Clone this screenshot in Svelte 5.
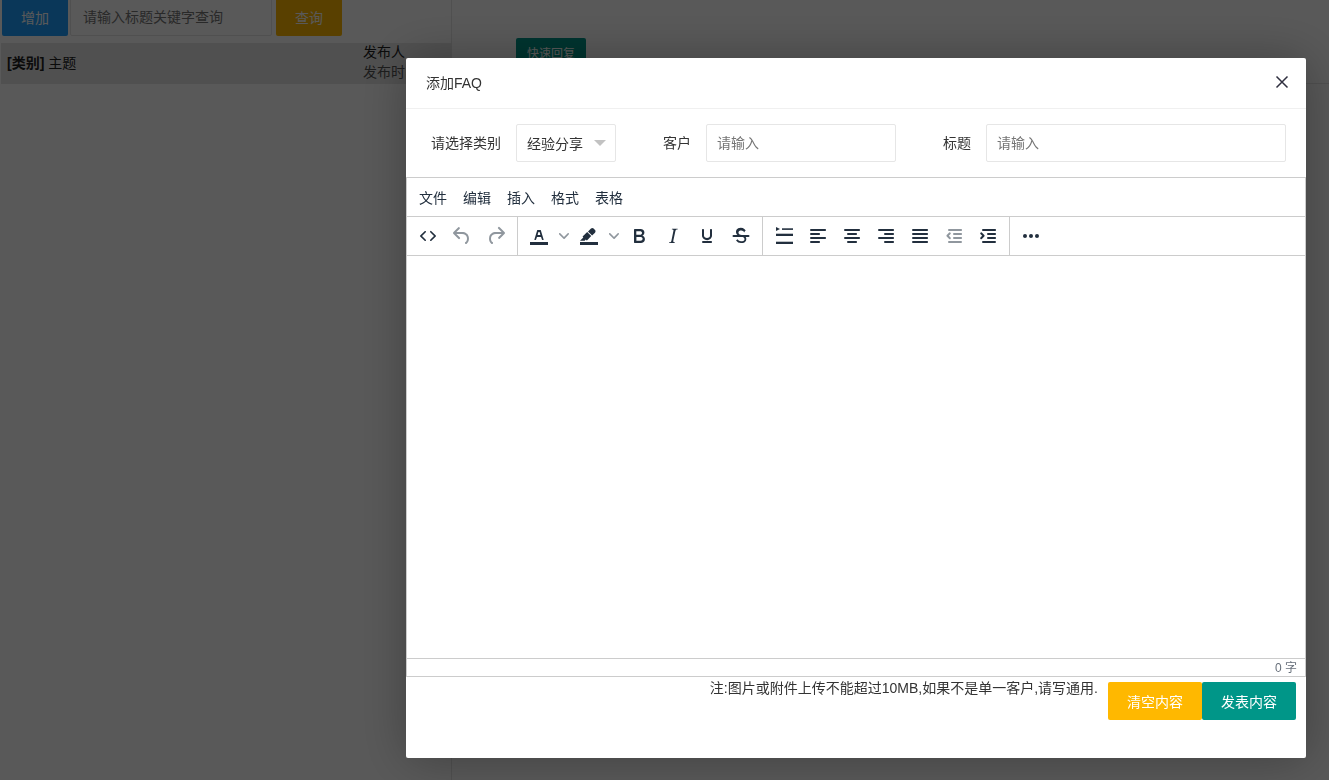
<script>
  const menus = ['文件', '编辑', '插入', '格式', '表格'];
  const icons = {
    code: 'M9.8 15.7c.3.3.3.8 0 1-.3.4-.9.4-1.2 0l-4.4-4.1a.8.8 0 0 1 0-1.2l4.4-4.2c.3-.3.9-.3 1.2 0 .3.3.3.8 0 1.1L6 12l3.8 3.7zM14.2 15.7c-.3.3-.3.8 0 1 .4.4.9.4 1.2 0l4.4-4.1c.3-.3.3-.9 0-1.2l-4.4-4.2a.8.8 0 0 0-1.2 0c-.3.3-.3.8 0 1.1L18 12l-3.8 3.7z',
    undo: 'M6.4 8H12c3.7 0 6.2 2 6.8 5.1.6 2.7-.4 5.6-2.3 6.8a1 1 0 0 1-1-1.8c1.1-.6 1.8-2.7 1.4-4.6-.5-2.1-2.1-3.5-4.9-3.5H6.4l3.3 3.3a1 1 0 1 1-1.4 1.4l-5-5a1 1 0 0 1 0-1.4l5-5a1 1 0 0 1 1.4 1.4L6.4 8z',
    redo: 'M17.6 10H12c-2.8 0-4.4 1.4-4.9 3.5-.4 2 .3 4 1.4 4.6a1 1 0 1 1-1 1.8c-2-1.2-2.9-4.1-2.3-6.8.6-3 3-5.1 6.8-5.1h5.6l-3.3-3.3a1 1 0 1 1 1.4-1.4l5 5a1 1 0 0 1 0 1.4l-5 5a1 1 0 0 1-1.4-1.4l3.3-3.3z',
    color: 'M3 18h18v3H3zM8.7 16h-.8a.5.5 0 0 1-.5-.6l2.7-9c.1-.3.3-.4.5-.4h2.8c.2 0 .4.1.5.4l2.7 9a.5.5 0 0 1-.5.6h-.8a.5.5 0 0 1-.4-.4l-.7-2.2c0-.3-.3-.4-.5-.4h-3.4c-.2 0-.4.1-.5.4l-.7 2.2c0 .3-.2.4-.4.4zm2.6-7.6l-.6 2a.5.5 0 0 0 .5.6h1.6a.5.5 0 0 0 .5-.6l-.6-2c0-.3-.3-.4-.5-.4h-.4c-.2 0-.4.1-.5.4z',
    highlight: 'M3 18h18v3H3zM7.7 16.7H3l3.3-3.3-.7-.8L10.2 8l4 4.1-4 4.2c-.2.2-.6.2-.8 0l-.6-.7-1.1 1.1zm5-7.5L11 7.4l3-2.9a2 2 0 0 1 2.6 0L18 6c.7.7.7 2 0 2.7l-2.9 2.9-1.8-1.8-.5-.6',
    bold: 'M7.8 19c-.3 0-.5 0-.6-.2l-.2-.5V5.7c0-.2 0-.4.2-.5l.6-.2h5c1.5 0 2.7.3 3.5 1 .7.6 1.1 1.4 1.1 2.5a3 3 0 0 1-.6 1.9c-.4.6-1 1-1.6 1.2.4.1.9.3 1.3.6s.8.7 1 1.2c.3.4.4 1 .4 1.6 0 1.3-.4 2.3-1.3 3-.8.7-2 1-3.7 1H7.8zm5-8.3c.6 0 1.2-.1 1.6-.5.4-.3.6-.7.6-1.3 0-1.1-.8-1.7-2.3-1.7H9.3v3.5h3.4zm.5 6c.7 0 1.3-.1 1.7-.4.4-.4.6-.9.6-1.5s-.2-1-.7-1.4c-.4-.3-1-.4-2-.4H9.4v3.8h4z',
    italic: 'M16.7 4.7l-.1.9h-.3c-.6 0-1 0-1.4.3-.3.3-.4.6-.5 1.1l-2.1 9.8v.6c0 .5.4.8 1.4.8h.2l-.2.8H8l.2-.8h.2c1.1 0 1.8-.5 2-1.5l2-9.8.1-.5c0-.6-.4-.8-1.4-.8h-.3l.2-.9h5.8z',
    underline: 'M16 5c.6 0 1 .4 1 1v5.5a4 4 0 0 1-.4 1.8l-1 1.4a5.3 5.3 0 0 1-5.5 1 5 5 0 0 1-1.6-1c-.5-.4-.8-.9-1.1-1.4a4 4 0 0 1-.4-1.8V6c0-.6.4-1 1-1s1 .4 1 1v5.5c0 .3 0 .6.2 1l.6.7a3.3 3.3 0 0 0 2.2.8 3.4 3.4 0 0 0 2.2-.8c.3-.2.4-.5.6-.8l.2-.9V6c0-.6.4-1 1-1zM8 17h8c.6 0 1 .4 1 1s-.4 1-1 1H8a1 1 0 0 1 0-2z',
    strike: 'M15.600 8.500c-.5-.7-1-1.100-1.300-1.300-.6-.4-1.300-.6-2-.6-2.700 0-2.800 1.700-2.800 2.100 0 1.600 1.800 2 3.200 2.300 4.400.9 4.600 2.800 4.600 3.900 0 1.400-.7 4.100-5 4.100A6.200 6.200 0 0 1 7 16.400l1.500-1.100c.4.6 1.600 2 3.700 2 1.600 0 2.500-.4 3-1 .5-.8.3-2-.3-2.600-.7-.7-1.600-.9-2.900-1.200-1.600-.4-5-1.100-5-4.400 0-.8.3-4.300 4.800-4.300 1.400 0 2.600.4 3.500 1.100.6.4 1 .9 1.400 1.500l-1.100 1.200z|M4.500 11h15a1 1 0 0 1 0 2h-15a1 1 0 0 1 0-2z',
    lineheight: 'M4 3l4 2-4 2z|M10 4.300h11v1.600H10z|M4 9.700h17v2.300H4z|M4 17.700h17v2.300H4z',
    left: 'M5 5h14c.6 0 1 .4 1 1s-.4 1-1 1H5a1 1 0 1 1 0-2zm0 4h8c.6 0 1 .4 1 1s-.4 1-1 1H5a1 1 0 1 1 0-2zm0 8h8c.6 0 1 .4 1 1s-.4 1-1 1H5a1 1 0 0 1 0-2zm0-4h14c.6 0 1 .4 1 1s-.4 1-1 1H5a1 1 0 0 1 0-2z',
    center: 'M5 5h14c.6 0 1 .4 1 1s-.4 1-1 1H5a1 1 0 1 1 0-2zm3 4h8c.6 0 1 .4 1 1s-.4 1-1 1H8a1 1 0 1 1 0-2zm0 8h8c.6 0 1 .4 1 1s-.4 1-1 1H8a1 1 0 0 1 0-2zm-3-4h14c.6 0 1 .4 1 1s-.4 1-1 1H5a1 1 0 0 1 0-2z',
    right: 'M5 5h14c.6 0 1 .4 1 1s-.4 1-1 1H5a1 1 0 1 1 0-2zm6 4h8c.6 0 1 .4 1 1s-.4 1-1 1h-8a1 1 0 0 1 0-2zm0 8h8c.6 0 1 .4 1 1s-.4 1-1 1h-8a1 1 0 0 1 0-2zm-6-4h14c.6 0 1 .4 1 1s-.4 1-1 1H5a1 1 0 0 1 0-2z',
    justify: 'M5 5h14c.6 0 1 .4 1 1s-.4 1-1 1H5a1 1 0 1 1 0-2zm0 4h14c.6 0 1 .4 1 1s-.4 1-1 1H5a1 1 0 1 1 0-2zm0 4h14c.6 0 1 .4 1 1s-.4 1-1 1H5a1 1 0 0 1 0-2zm0 4h14c.6 0 1 .4 1 1s-.4 1-1 1H5a1 1 0 0 1 0-2z',
    outdent: 'M7 5h12c.6 0 1 .4 1 1s-.4 1-1 1H7a1 1 0 1 1 0-2zm5 4h7c.6 0 1 .4 1 1s-.4 1-1 1h-7a1 1 0 0 1 0-2zm0 4h7c.6 0 1 .4 1 1s-.4 1-1 1h-7a1 1 0 0 1 0-2zm-5 4h12a1 1 0 0 1 0 2H7a1 1 0 0 1 0-2zm1.600-3.400a1 1 0 0 1-1.400 1.400L4.700 12.500a1 1 0 0 1 0-1.400L7.200 8.600a1 1 0 0 1 1.400 1.400L6.800 11.800l1.800 1.800z',
    indent: 'M7 5h12c.6 0 1 .4 1 1s-.4 1-1 1H7a1 1 0 1 1 0-2zm5 4h7c.6 0 1 .4 1 1s-.4 1-1 1h-7a1 1 0 0 1 0-2zm0 4h7c.6 0 1 .4 1 1s-.4 1-1 1h-7a1 1 0 0 1 0-2zm-5 4h12a1 1 0 0 1 0 2H7a1 1 0 0 1 0-2zm-2.600-3.400l1.800-1.800-1.800-1.800a1 1 0 0 1 1.400-1.400l2.500 2.500a1 1 0 0 1 0 1.400L5.800 15a1 1 0 0 1-1.400-1.400z',
    more: 'M6 10a2 2 0 0 0-2 2c0 1.100.9 2 2 2a2 2 0 0 0 2-2 2 2 0 0 0-2-2zm12 0a2 2 0 0 0-2 2c0 1.100.9 2 2 2a2 2 0 0 0 2-2 2 2 0 0 0-2-2zm-6 0a2 2 0 0 0-2 2c0 1.100.9 2 2 2a2 2 0 0 0 2-2 2 2 0 0 0-2-2z'
  };
  const groups = [
    [{ i: 'code' }, { i: 'undo', off: true }, { i: 'redo', off: true }],
    [{ i: 'color', split: true }, { i: 'highlight', split: true }, { i: 'bold' }, { i: 'italic' }, { i: 'underline' }, { i: 'strike' }],
    [{ i: 'lineheight' }, { i: 'left' }, { i: 'center' }, { i: 'right' }, { i: 'justify' }, { i: 'outdent', off: true }, { i: 'indent' }],
    [{ i: 'more' }]
  ];
</script>

<div class="page">
  <section class="left">
    <div class="search">
      <button class="btn blue">增加</button>
      <input class="kw" placeholder="请输入标题关键字查询" />
      <button class="btn amber">查询</button>
    </div>
    <div class="thead">
      <span class="subject"><b>[类别]</b> 主题</span>
      <span class="meta"><span>发布人</span><span class="time">发布时间</span></span>
    </div>
  </section>
  <section class="right">
    <div class="reply-bar"><button class="reply">快速回复</button></div>
  </section>
</div>

<div class="shade"></div>

<div class="modal">
  <header class="m-head">
    <span class="m-title">添加FAQ</span>
    <svg class="close" width="14" height="14" viewBox="0 0 14 14"><path d="M1.500 1.500l11 11M12.500 1.500l-11 11" /></svg>
  </header>
  <div class="fields">
    <span class="label first">请选择类别</span>
    <div class="select">经验分享<i class="caret"></i></div>
    <span class="label gap">客户</span>
    <input class="field customer" placeholder="请输入" />
    <span class="label gap">标题</span>
    <input class="field title" placeholder="请输入" />
  </div>
  <div class="editor">
    <div class="menubar">
      {#each menus as m}<span class="menu">{m}</span>{/each}
    </div>
    <div class="toolbar">
      {#each groups as g}
        <div class="group">
          {#each g as b}
            <span class="tool" class:off={b.off}>
              <svg width="24" height="24" viewBox="0 0 24 24">
                {#each icons[b.i].split('|') as d}<path fill-rule="evenodd" {d} />{/each}
              </svg>
            </span>
            {#if b.split}
              <span class="chev">
                <svg width="10" height="10" viewBox="0 0 10 10"><path d="M8.700 2.200c.3-.3.8-.3 1 0 .4.4.4.9 0 1.200L5.700 7.800c-.3.3-.9.3-1.200 0L.2 3.400a.8.8 0 0 1 0-1.200c.3-.3.8-.3 1.100 0L5 6l3.700-3.800z" /></svg>
              </span>
            {/if}
          {/each}
        </div>
      {/each}
    </div>
    <div class="body"></div>
    <div class="status">0 字</div>
  </div>
  <div class="foot">
    <span class="note">注:图片或附件上传不能超过10MB,如果不是单一客户,请写通用.</span>
    <button class="btn amber big">清空内容</button>
    <button class="btn teal big">发表内容</button>
  </div>
</div>

<style>
  :global(body) {
    margin: 0;
    background: #fff;
    font-family: "Liberation Sans", "Noto Sans CJK SC", sans-serif;
    font-size: 14px;
    color: #333;
    overflow: hidden;
  }
  .page {
    display: flex;
    height: 780px;
  }
  .left {
    flex: none;
    width: 450px;
    padding-left: 1px;
    border-right: 1px solid #e6e6e6;
  }
  .search {
    display: flex;
    margin: -2px 0 0 1px;
  }
  .btn {
    border: 0;
    border-radius: 2px;
    height: 38px;
    padding: 0;
    color: #fff;
    font: inherit;
  }
  .blue { background: #1e9fff; width: 66px; }
  .amber { background: #ffb800; }
  .search .amber { width: 66px; margin-left: 4px; }
  .kw {
    width: 202px;
    height: 38px;
    box-sizing: border-box;
    margin-left: 2px;
    padding: 0 10px 0 12px;
    border: 1px solid #e6e6e6;
    border-radius: 2px;
    font: inherit;
    outline: 0;
  }
  .thead {
    display: flex;
    align-items: center;
    height: 41px;
    box-sizing: border-box;
    margin-top: 7px;
    padding: 0 0 4px 6px;
    background: #e6e6e6;
    color: #222;
    overflow: hidden;
  }
  .subject { width: 356px; flex: none; }
  .meta {
    display: flex;
    flex-direction: column;
    line-height: 20px;
    white-space: nowrap;
  }
  .time { color: #555; }
  .right { flex: 1; min-width: 0; }
  .reply-bar {
    height: 84px;
    box-sizing: border-box;
    padding: 38px 0 0 64px;
    border-bottom: 1px solid #e6e6e6;
  }
  .reply {
    width: 70px;
    height: 30px;
    border: 0;
    border-radius: 2px;
    background: #009688;
    color: #fff;
    font: 12px "Liberation Sans", "Noto Sans CJK SC", sans-serif;
    padding: 0 0 2px;
  }
  .shade {
    position: fixed;
    inset: 0;
    background: rgba(0, 0, 0, 0.65);
  }
  .modal {
    position: fixed;
    left: 406px;
    top: 58px;
    width: 900px;
    height: 700px;
    background: #fff;
    border-radius: 2px;
    box-shadow: 1px 1px 50px rgba(0, 0, 0, 0.3);
    display: flex;
    flex-direction: column;
  }
  .m-head {
    display: flex;
    align-items: center;
    justify-content: space-between;
    height: 50px;
    flex: none;
    padding: 0 17px 0 20px;
    border-bottom: 1px solid #f0f0f0;
  }
  .m-title { margin-bottom: 2px; }
  .close { margin-bottom: 2px; }
  .close path { stroke: #2f2f3f; stroke-width: 1.500; fill: none; }
  .fields {
    display: flex;
    align-items: center;
    height: 68px;
    flex: none;
    padding-left: 25px;
    box-sizing: border-box;
  }
  .label { margin-right: 15px; padding-bottom: 2px; color: #333; white-space: nowrap; }
  .gap { margin-left: 47px; }
  .select, .field {
    height: 38px;
    box-sizing: border-box;
    border: 1px solid #e6e6e6;
    border-radius: 2px;
    padding: 0 10px;
    font: inherit;
    outline: 0;
    color: #333;
  }
  .select {
    position: relative;
    width: 100px;
    line-height: 38px;
  }
  .caret {
    position: absolute;
    right: 9px;
    top: 15px;
    border: 6px solid transparent;
    border-top-color: #c2c2c2;
    border-bottom: 0;
  }
  .customer { width: 190px; }
  .title { width: 300px; }
  .field::placeholder, .kw::placeholder { color: #757575; }
  .editor {
    flex: none;
    height: 500px;
    box-sizing: border-box;
    border: 1px solid #ccc;
    display: flex;
    flex-direction: column;
    color: #222f3e;
  }
  .menubar {
    display: flex;
    align-items: center;
    height: 38px;
    flex: none;
    padding-left: 4px;
    border-bottom: 1px solid #ccc;
  }
  .menu { padding: 0 8px; font-size: 14px; }
  .toolbar {
    display: flex;
    height: 38px;
    flex: none;
    border-bottom: 1px solid #ccc;
  }
  .group {
    display: flex;
    align-items: center;
    padding: 0 4px;
    border-right: 1px solid #ccc;
  }
  .group:last-child { border-right: 0; }
  .tool {
    display: flex;
    align-items: center;
    justify-content: center;
    width: 34px;
    height: 34px;
  }
  .tool svg { fill: #222f3e; }
  .tool.off svg { fill: rgba(34, 47, 62, 0.5); }
  .chev {
    display: flex;
    align-items: center;
    justify-content: center;
    width: 16px;
    height: 34px;
  }
  .chev svg { fill: rgba(34, 47, 62, 0.5); }
  .body { flex: 1; }
  .status {
    height: 18px;
    flex: none;
    box-sizing: border-box;
    border-top: 1px solid #ccc;
    padding-right: 8px;
    text-align: right;
    font-size: 12px;
    line-height: 19px;
    color: rgba(34, 47, 62, 0.7);
  }
  .foot {
    display: flex;
    justify-content: flex-end;
    align-items: flex-start;
    padding: 5px 10px 0 0;
  }
  .note { margin-right: 10px; line-height: 12px; color: #333; }
  .big { width: 94px; }
  .teal { background: #009688; }
</style>
